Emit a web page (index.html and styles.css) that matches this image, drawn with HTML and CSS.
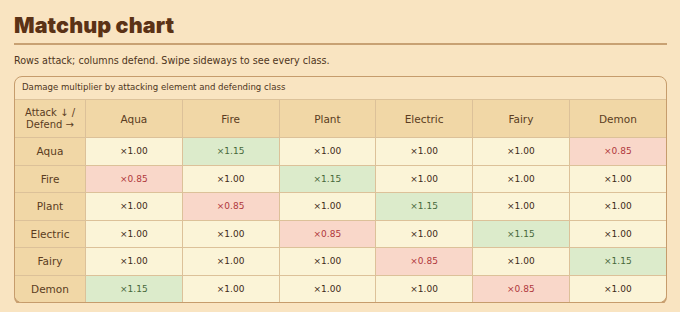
FILE: index.html
```html
<!DOCTYPE html>
<html lang="en">
<head>
<meta charset="utf-8">
<title>Matchup chart</title>
<link rel="stylesheet" href="styles.css">
</head>
<body>
<main class="page">
  <h1 class="title">Matchup chart</h1>
  <p class="lede">Rows attack; columns defend. Swipe sideways to see every class.</p>
  <div class="chart">
    <table class="grid">
      <caption>Damage multiplier by attacking element and defending class</caption>
      <thead>
        <tr>
          <th class="corner">Attack ↓ /<br>Defend →</th>
          <th>Aqua</th><th>Fire</th><th>Plant</th><th>Electric</th><th>Fairy</th><th>Demon</th>
        </tr>
      </thead>
      <tbody>
        <tr><th>Aqua</th><td>×1.00</td><td class="up">×1.15</td><td>×1.00</td><td>×1.00</td><td>×1.00</td><td class="down">×0.85</td></tr>
        <tr><th>Fire</th><td class="down">×0.85</td><td>×1.00</td><td class="up">×1.15</td><td>×1.00</td><td>×1.00</td><td>×1.00</td></tr>
        <tr><th>Plant</th><td>×1.00</td><td class="down">×0.85</td><td>×1.00</td><td class="up">×1.15</td><td>×1.00</td><td>×1.00</td></tr>
        <tr><th>Electric</th><td>×1.00</td><td>×1.00</td><td class="down">×0.85</td><td>×1.00</td><td class="up">×1.15</td><td>×1.00</td></tr>
        <tr><th>Fairy</th><td>×1.00</td><td>×1.00</td><td>×1.00</td><td class="down">×0.85</td><td>×1.00</td><td class="up">×1.15</td></tr>
        <tr><th>Demon</th><td class="up">×1.15</td><td>×1.00</td><td>×1.00</td><td>×1.00</td><td class="down">×0.85</td><td>×1.00</td></tr>
      </tbody>
    </table>
  </div>
</main>
</body>
</html>
```
FILE: styles.css
```css
html, body {
  margin: 0;
  padding: 0;
  background: #f9e4c1;
}
body {
  font-family: "DejaVu Sans", "Noto Sans", sans-serif;
  color: #5a3a1e;
}
.page {
  padding: 11px 13px 0 14px;
}
.title {
  margin: 0;
  font-family: Inter, "Open Sans", sans-serif;
  font-weight: 900;
  font-size: 21.5px;
  line-height: 28px;
  color: #5b3216;
  padding-bottom: 4px;
  border-bottom: 2px solid #c8a173;
  letter-spacing: 0.1px;
}
.lede {
  margin: 0;
  padding: 9px 0 9px;
  font-size: 9.6px;
  line-height: 13px;
  color: #4e3420;
}
.chart {
  border: 1.5px solid #c69c6c;
  border-radius: 8px;
  overflow: hidden;
  box-shadow: 0 2px 0 #c9a071;
  background: #f9e4c1;
}
.grid {
  width: 100%;
  border-collapse: collapse;
  table-layout: fixed;
}
.grid caption {
  text-align: left;
  font-size: 8.6px;
  line-height: 12px;
  padding: 4px 7px 6px;
  color: #4e3420;
}
.grid th, .grid td {
  border: 1px solid #dcc199;
  text-align: center;
  height: 26.5px;
  padding: 0;
  font-weight: normal;
}
.grid tr > :first-child { border-left: none; }
.grid tr > :last-child { border-right: none; }
.grid tbody tr:last-child > * { border-bottom: none; }
.grid thead th {
  height: 37px;
  background: #f1d7a6;
  font-size: 10.5px;
  color: #5a3c22;
}
.grid thead th.corner {
  width: 70px;
  font-size: 10px;
  line-height: 12px;
}
.grid tbody th {
  background: #f1d7a6;
  font-size: 10.5px;
  color: #5a3c22;
}
.grid td {
  background: #fbf4d7;
  font-size: 9px;
  color: #3e2a18;
}
.grid td.up {
  background: #dcebcb;
  color: #47683a;
}
.grid td.down {
  background: #f9d7c9;
  color: #b0373c;
}
```
